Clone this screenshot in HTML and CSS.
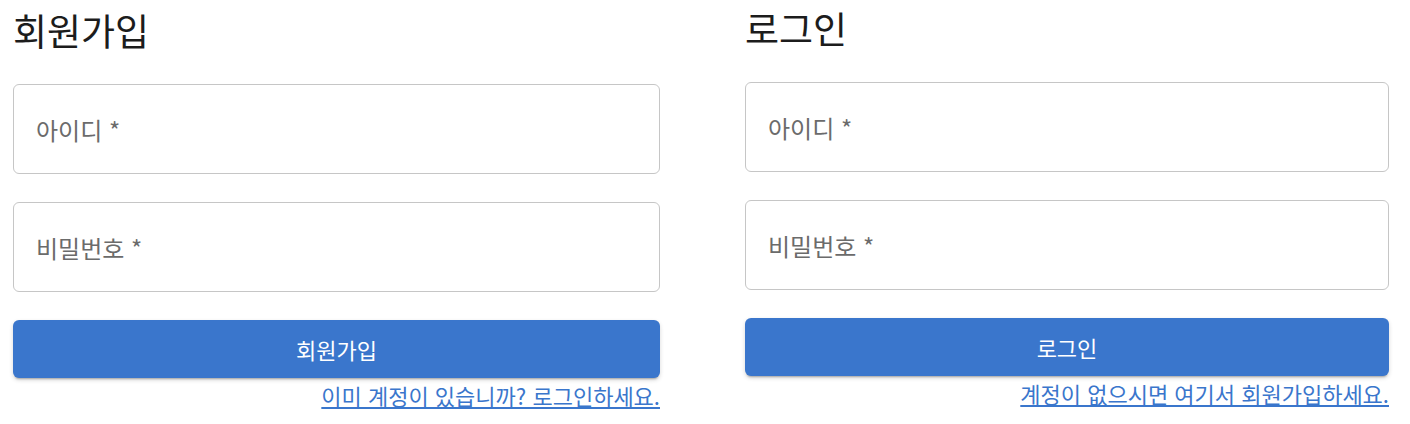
FILE: index.html
```html
<!DOCTYPE html>
<html lang="ko">
<head>
<meta charset="utf-8">
<link rel="stylesheet" href="styles.css">
</head>
<body>
<div class="page">
  <form class="panel">
    <h2 class="title">회원가입</h2>
    <div class="field"><span class="label">아이디 *</span></div>
    <div class="field"><span class="label">비밀번호 *</span></div>
    <button type="button" class="btn">회원가입</button>
    <div class="link-row"><a class="link" href="#">이미 계정이 있습니까? 로그인하세요.</a></div>
  </form>
  <form class="panel panel-right">
    <h2 class="title">로그인</h2>
    <div class="field"><span class="label">아이디 *</span></div>
    <div class="field"><span class="label">비밀번호 *</span></div>
    <button type="button" class="btn">로그인</button>
    <div class="link-row"><a class="link" href="#">계정이 없으시면 여기서 회원가입하세요.</a></div>
  </form>
</div>
</body>
</html>
```
FILE: styles.css
```css
html, body {
  margin: 0;
  padding: 0;
  background: #ffffff;
}
body {
  font-family: "Noto Sans CJK KR", "Noto Sans", sans-serif;
  color: #1a1a1a;
}
.page {
  display: grid;
  grid-template-columns: 647px 644px;
  column-gap: 85px;
  padding: 0 21px 0 13px;
}
.panel {
  display: flex;
  flex-direction: column;
  margin: 0;
}
.panel-right {
  margin-top: -2px;
}
.title {
  margin: 4px 0 0 0;
  height: 80px;
  font-size: 37px;
  font-weight: 400;
  line-height: 52px;
  color: #1c1c1c;
}
.field {
  height: 88px;
  border: 1px solid #c6c6c6;
  border-radius: 6px;
  display: flex;
  align-items: center;
  padding: 0 22px;
  margin-bottom: 28px;
}
.label {
  font-size: 24px;
  color: #6b6b6b;
}
.btn {
  height: 58px;
  border: 0;
  border-radius: 6px;
  background: #3a76cc;
  color: #ffffff;
  font-family: inherit;
  font-size: 22px;
  box-shadow: 0 3px 2px -2px rgba(0,0,0,0.25), 0 2px 4px rgba(0,0,0,0.16);
  padding: 0;
}
.link-row {
  display: flex;
  justify-content: flex-end;
  margin-top: 2px;
}
.link {
  font-size: 22px;
  color: #3a76cc;
  text-decoration: underline;
  line-height: 30px;
}
```
